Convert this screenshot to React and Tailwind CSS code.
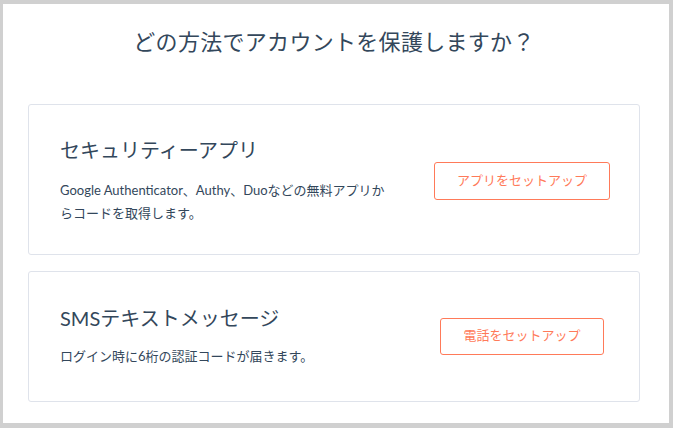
import React from "react";

const methods = [
  {
    title: "セキュリティーアプリ",
    desc: (
      <>
        Google Authenticator、Authy、Duoなどの無料アプリか
        <br />
        らコードを取得します。
      </>
    ),
    action: "アプリをセットアップ",
    card: "pt-[31px] pb-[29px]",
    btn: "h-[38px] w-[176px]",
    gap: "mb-[15px]",
  },
  {
    title: "SMSテキストメッセージ",
    desc: "ログイン時に6桁の認証コードが届きます。",
    action: "電話をセットアップ",
    card: "pt-[32px] pb-[33px]",
    btn: "h-[37px] w-[164px]",
    gap: "mb-[13px]",
  },
];

export default function App() {
  return (
    <div
      className="h-[428px] w-[673px] bg-[#d0d0d0] pt-[4px] pl-[3px] pr-[4px] pb-[5px] text-[#33475b]"
      style={{ fontFamily: 'Lato, "Noto Sans CJK JP", sans-serif' }}
    >
      <div className="h-full bg-white pl-[25px] pr-[29px]">
        {/* heading */}
        <h1 className="pt-[22px] text-center text-[22px] font-normal leading-[32px] tracking-[0.3px]">
          どの方法でアカウントを保護しますか？
        </h1>

        <div className="mt-[46px] flex flex-col gap-[16px]">
          {methods.map((m) => (
            <div
              key={m.title}
              className={`flex rounded-[3px] border border-[#dfe3eb] pl-[31px] ${m.card}`}
            >
              <div className="flex-1">
                <h2 className={`text-[20px] font-normal leading-[28px] ${m.gap}`}>
                  {m.title}
                </h2>
                <p className="text-[13px] leading-[23px]">{m.desc}</p>
              </div>
              <div className="flex w-[234px] items-center justify-center">
                <button
                  className={`flex items-center justify-center rounded-[3px] border border-[#ff7a59] text-[13px] text-[#ff7a59] ${m.btn}`}
                >
                  {m.action}
                </button>
              </div>
            </div>
          ))}
        </div>
      </div>
    </div>
  );
}
